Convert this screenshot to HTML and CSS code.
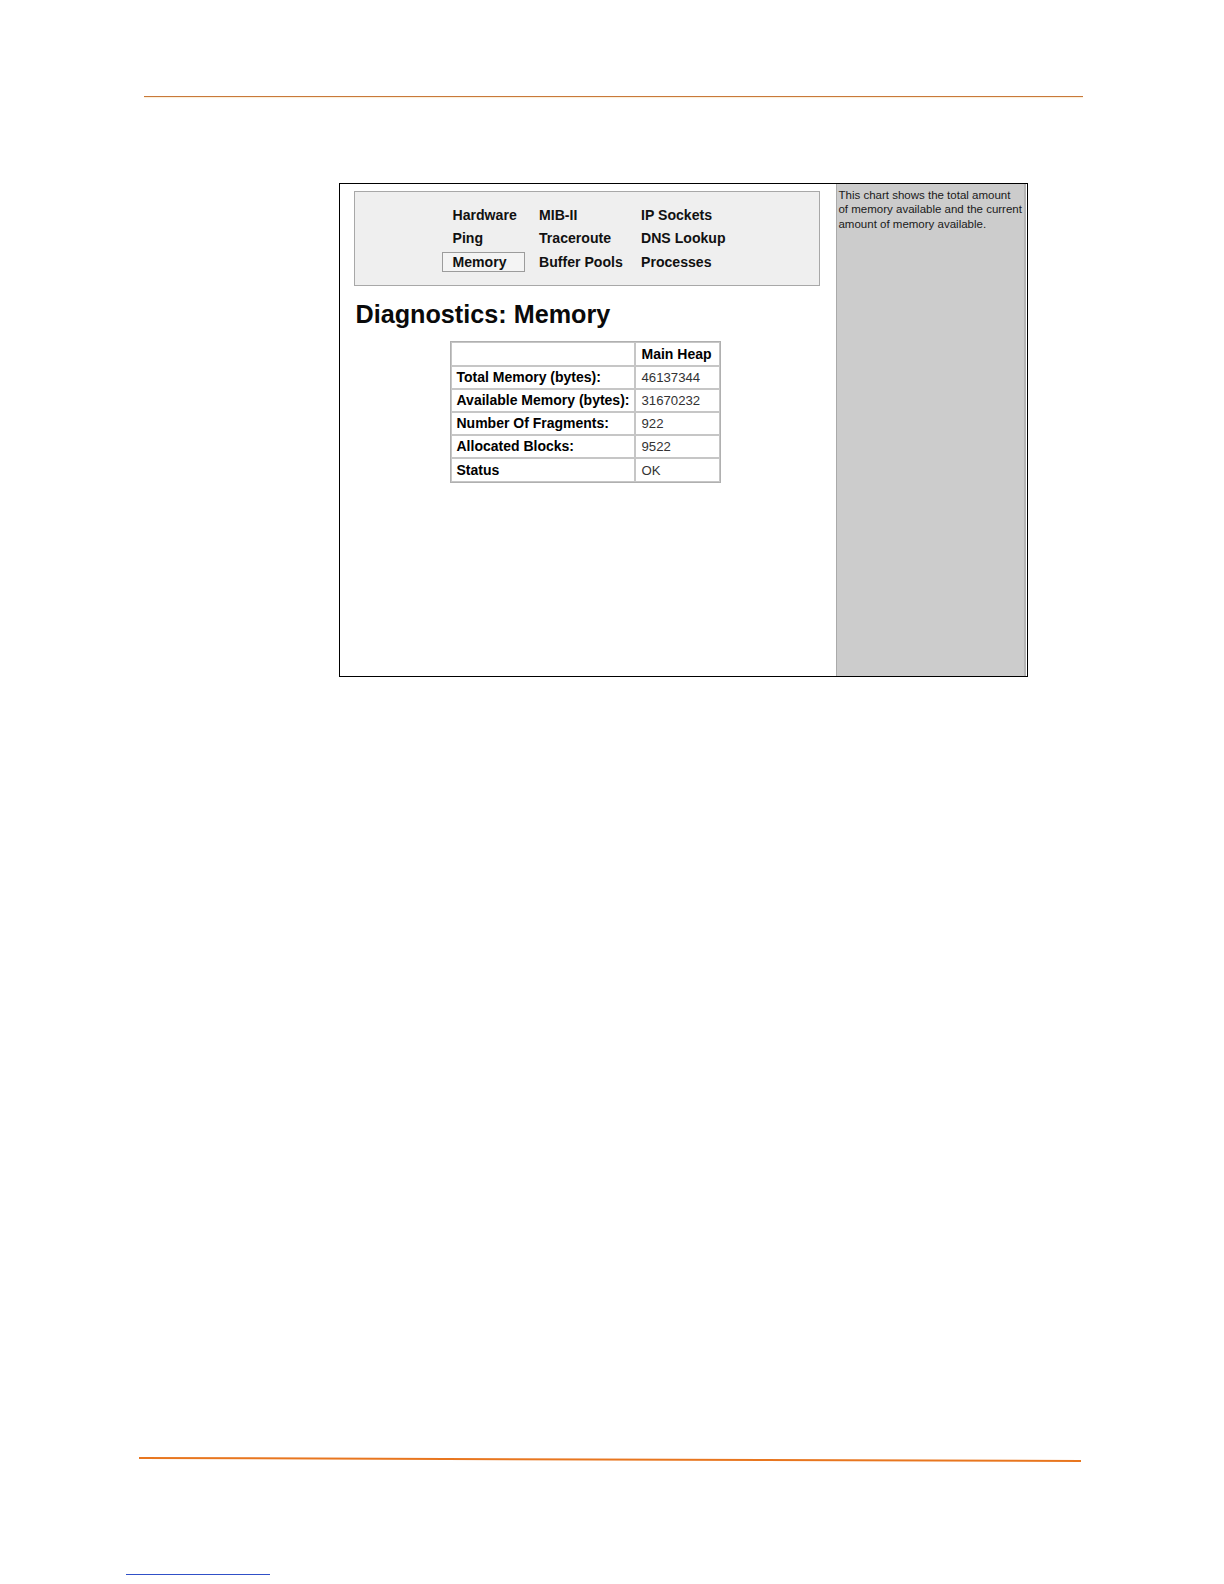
FILE: index.html
```html
<!DOCTYPE html>
<html>
<head>
<meta charset="utf-8">
<title>Diagnostics: Memory</title>
<link rel="stylesheet" href="styles.css">
</head>
<body>
<div class="page">
  <div class="top-rule"></div>
  <div class="frame">
    <div class="main">
      <div class="nav">
        <div class="nav-grid">
          <span class="nav-item">Hardware</span>
          <span class="nav-item">MIB-II</span>
          <span class="nav-item">IP Sockets</span>
          <span class="nav-item">Ping</span>
          <span class="nav-item">Traceroute</span>
          <span class="nav-item">DNS Lookup</span>
          <span class="nav-item selected">Memory</span>
          <span class="nav-item">Buffer Pools</span>
          <span class="nav-item">Processes</span>
        </div>
      </div>
      <h1 class="title">Diagnostics: Memory</h1>
      <table class="mem">
        <tr><td class="lbl"></td><td class="hd">Main Heap</td></tr>
        <tr><td class="lbl">Total Memory (bytes):</td><td class="val">46137344</td></tr>
        <tr><td class="lbl">Available Memory (bytes):</td><td class="val">31670232</td></tr>
        <tr><td class="lbl">Number Of Fragments:</td><td class="val">922</td></tr>
        <tr><td class="lbl">Allocated Blocks:</td><td class="val">9522</td></tr>
        <tr><td class="lbl">Status</td><td class="val">OK</td></tr>
      </table>
    </div>
    <div class="side">
      <p class="side-text">This chart shows the total amount<br>of memory available and the current<br>amount of memory available.</p>
    </div>
  </div>
  <div class="bottom-rule"></div>
  <div class="link-rule"></div>
</div>
</body>
</html>
```

FILE: styles.css
```css
html, body {
  margin: 0;
  padding: 0;
  background: #ffffff;
}

.page {
  width: 1224px;
  height: 1584px;
  overflow: hidden;
  font-family: "Liberation Sans", Arial, sans-serif;
  color: #000;
}

.top-rule {
  margin: 96px 0 0 144px;
  width: 939px;
  height: 1px;
  background: #c8783a;
  box-shadow: 0 1px 1px #fbecd0;
}

.frame {
  margin: 86px 0 0 339px;
  width: 687px;
  height: 492px;
  border: 1px solid #000;
  display: flex;
}

.main {
  width: 482px;
  padding: 6.5px 0 0 14px;
}

.nav {
  width: 464px;
  height: 93px;
  border: 1px solid #a8a8a8;
  background: #efefef;
}

.nav-grid {
  display: grid;
  grid-template-columns: 86.5px 102px auto;
  row-gap: 2.7px;
  margin: 13.5px 0 0 87px;
}

.nav-item {
  justify-self: start;
  white-space: nowrap;
  font-size: 14.1px;
  font-weight: bold;
  line-height: 18.6px;
  padding: 0 17.5px 0 9.5px;
  border: 1px solid transparent;
  color: #111;
}

.nav-item.selected {
  border-color: #9c9c9c;
  background: #f4f4f4;
}

.title {
  margin: 13.7px 0 12.3px 1.5px;
  font-size: 25.2px;
  line-height: 30px;
  font-weight: bold;
  color: #0a0a0a;
}

.mem {
  margin-left: 95.5px;
  border-collapse: separate;
  border-spacing: 0;
  border: 1px solid #b0b0b0;
  font-size: 14px;
  table-layout: fixed;
}

.mem td {
  border: 1px solid #c6c6c6;
  height: 23.2px;
  padding: 0 4px 0 5px;
  line-height: 21px;
  box-sizing: border-box;
  white-space: nowrap;
}

.mem td.lbl {
  width: 184px;
  font-weight: bold;
}

.mem td.hd {
  width: 85.6px;
  font-weight: bold;
  padding-left: 6px;
}

.mem td.val {
  font-size: 13.2px;
  color: #333333;
  padding-left: 6px;
}

.side {
  width: 191px;
  background: #cccccc;
  border-left: 1px solid #aaaaaa;
  border-right: 2px solid #b4b4b4;
  margin-left: 10px;
  margin-right: 1px;
}

.side-text {
  margin: 3.7px 0 0 1.5px;
  font-size: 11.5px;
  line-height: 14.6px;
  color: #1a1a1a;
  white-space: nowrap;
}

.bottom-rule {
  margin: 780px 0 0 139px;
  width: 942px;
  height: 2px;
  background: #e8761f;
  transform: rotate(0.18deg);
  transform-origin: left center;
}

.link-rule {
  margin: 115px 0 0 126px;
  width: 144px;
  height: 1px;
  background: #3050c8;
}
```
